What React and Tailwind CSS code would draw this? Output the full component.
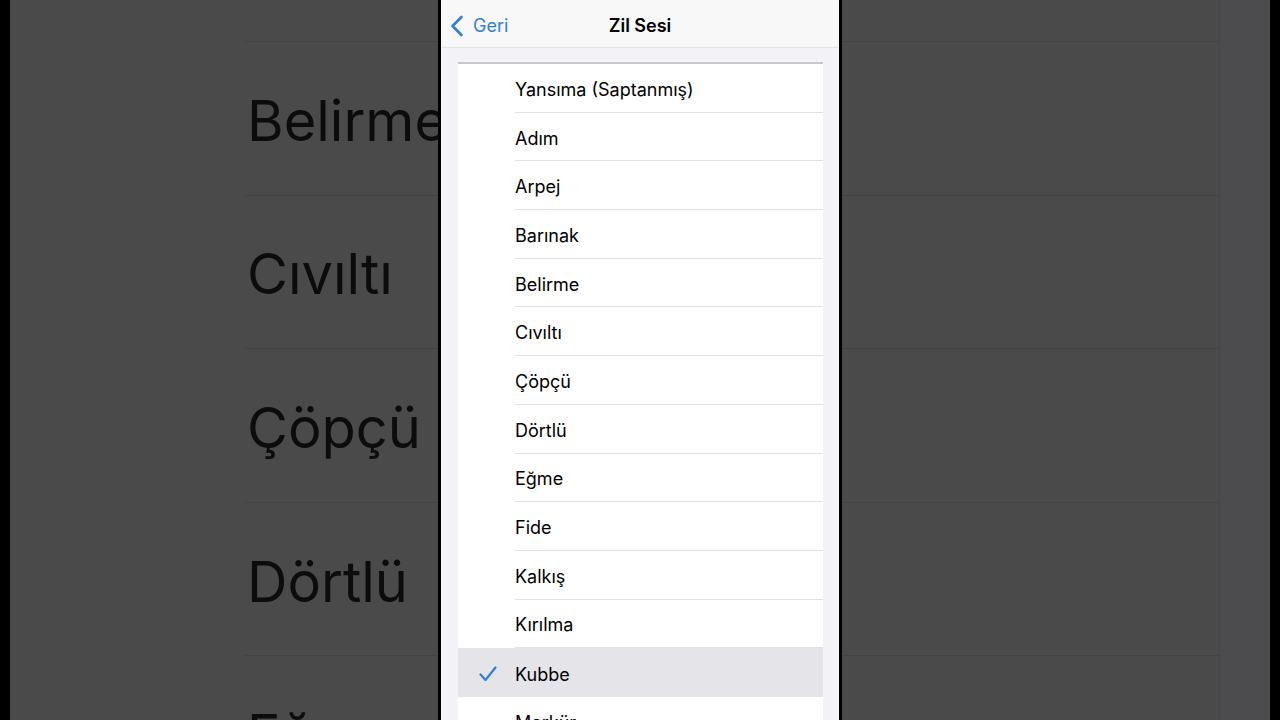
import React from 'react';

const bgRows = ['Belirme', 'Cıvıltı', 'Çöpçü', 'Dörtlü', 'Eğme'];

const tones = [
    'Yansıma (Saptanmış)',
    'Adım',
    'Arpej',
    'Barınak',
    'Belirme',
    'Cıvıltı',
    'Çöpçü',
    'Dörtlü',
    'Eğme',
    'Fide',
    'Kalkış',
    'Kırılma',
    'Kubbe',
    'Merkür',
];

const selected = 'Kubbe';

function Check() {
    return (
        <svg width="18" height="16" viewBox="0 0 18 16" fill="none">
            <path d="M1.5 8.5 L6.5 14 L16.5 1.5" stroke="#2f7fe0" strokeWidth="2.2" strokeLinecap="round" strokeLinejoin="round" />
        </svg>
    );
}

function Chevron() {
    return (
        <svg width="14" height="22" viewBox="0 0 14 22" fill="none">
            <path d="M11.5 2 L2.5 11 L11.5 20" stroke="#2f7fe0" strokeWidth="2.6" strokeLinecap="round" strokeLinejoin="round" />
        </svg>
    );
}

function Phone() {
    return (
        <div className="absolute left-[438px] top-0 w-[404px] h-[720px] border-x-[3px] border-black bg-[#f2f2f7] flex flex-col overflow-hidden">
            {/* nav bar */}
            <div className="relative h-[48px] shrink-0 bg-[#f8f8f9] border-b border-[#e3e3e6] flex items-center justify-center pt-[4px]">
                <div className="absolute left-[9px] top-0 h-full pt-[4px] flex items-center gap-[9px] text-[#2f7fe0] text-[18px]">
                    <Chevron />
                    <span>Geri</span>
                </div>
                <span className="font-semibold text-[18px] text-black">Zil Sesi</span>
            </div>

            {/* list */}
            <div className="px-[17px] pt-[14px] pr-[16px]">
                <div className="bg-white border-t-2 border-[#c8c8cc]">
                    {tones.map((t) => {
                        const on = t === selected;
                        return (
                            <div key={t} className={`h-[48.7px] flex items-stretch ${on ? 'bg-[#e4e4e9]' : ''}`}>
                                <div className="w-[57px] shrink-0 flex items-center justify-center pl-[2px] pt-[3px]">
                                    {on && <Check />}
                                </div>
                                <div className={`flex-1 flex items-center pt-[3px] text-[18px] text-black ${on ? '' : 'border-b border-[#e2e2e4]'}`}>
                                    {t}
                                </div>
                            </div>
                        );
                    })}
                </div>
            </div>
        </div>
    );
}

export default function App() {
    return (
        <div className="relative w-[1280px] h-[720px] overflow-hidden bg-black flex" style={{ fontFamily: 'Inter, "Noto Sans", sans-serif' }}>
            <div className="w-[10px] shrink-0 bg-black" />
            <div className="flex-1 bg-[#4a4a4a] flex">
                {/* blurred, enlarged copy of the list behind the phone */}
                <div className="w-[1209px] shrink-0 pl-[235px] pt-[41px] blur-[0.6px]">
                    {bgRows.map((t) => (
                        <div key={t} className="h-[153.6px] border-t border-[#424242] flex items-center pl-[2px] pt-[5px] text-[56px] text-[#0c0c0c]">
                            {t}
                        </div>
                    ))}
                </div>
                <div className="flex-1 bg-[#4c4c4e] border-l border-[#474749]" />
            </div>
            <div className="w-[10px] shrink-0 bg-black" />
            <Phone />
        </div>
    );
}
